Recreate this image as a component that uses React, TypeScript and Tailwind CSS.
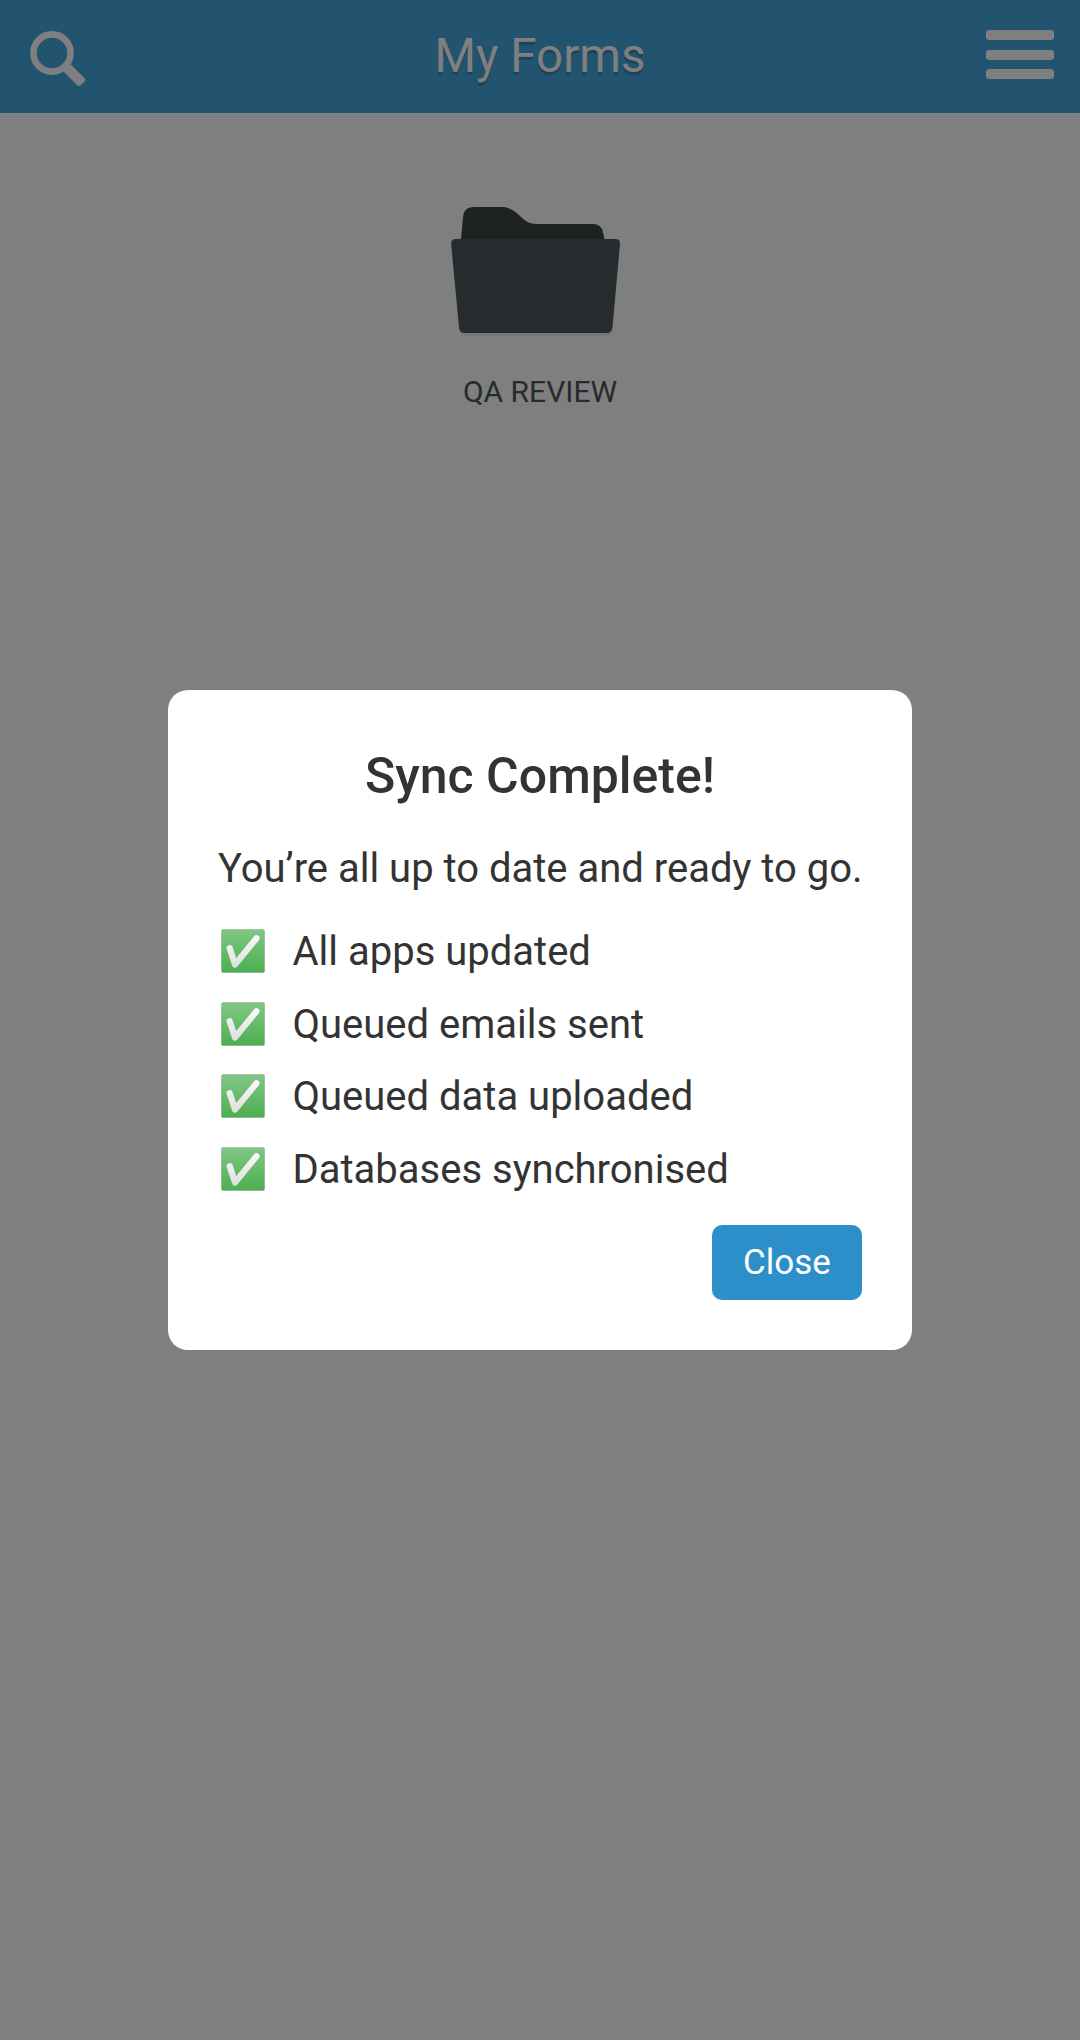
import { useId } from "react";

function SearchIcon() {
  return (
    <svg className="h-[60px] w-[60px]" viewBox="28 28 60 60" fill="none">
      <circle cx="52" cy="53" r="18.6" stroke="#fff" strokeWidth="6.6" />
      <path
        d="M70.8 64.6 84.6 78.2Q86 79.8 84.6 81.4L80.8 85.2Q79 86.6 77.2 85.2L63.2 71.2Z"
        fill="#fff"
      />
    </svg>
  );
}

function FolderIcon() {
  return (
    <svg className="h-[136px] w-[176px]" viewBox="18 14 176 136">
      <path
        d="M30.700 52 33 27Q34 17 43 17H72C81 17 86.500 22.500 90.500 26.500C95 31 99 34 107 34H163Q171 34 173 42L175 52Z"
        fill="#3c4447"
      />
      <path d="M27 52H186L183 139Q182 146 176 146H36Q30 146 29 139Z" fill="#000" opacity="0.06" />
      <path
        d="M26 49H185.500Q190.300 49 190 54L182.500 137Q182 143 176.500 143H34.500Q29.400 143 29 137L21.100 54Q21 49 26 49Z"
        fill="#4c565c"
      />
    </svg>
  );
}

function CheckEmoji() {
  const id = useId();
  return (
    <svg className="mb-[2px] h-[44px] w-[44px] shrink-0" viewBox="0 0 44 44">
      <defs>
        <linearGradient id={`${id}g`} x1="0" y1="0" x2="0" y2="1">
          <stop offset="0" stopColor="#81c784" />
          <stop offset="1" stopColor="#4caf50" />
        </linearGradient>
        <linearGradient id={`${id}w`} gradientUnits="userSpaceOnUse" x1="0" y1="6" x2="0" y2="39">
          <stop offset="0" stopColor="#fafafa" />
          <stop offset="1" stopColor="#dedede" />
        </linearGradient>
      </defs>
      <rect x="0.5" y="0.5" width="43" height="43" rx="1.600" fill={`url(#${id}g)`} stroke="#424242" strokeOpacity="0.2" />
      <path
        d="M8.700 19.200 14 35.500 35.500 9.200"
        fill="none"
        stroke={`url(#${id}w)`}
        strokeWidth="6.200"
        strokeLinecap="round"
        strokeLinejoin="round"
      />
    </svg>
  );
}

const results = [
  "All apps updated",
  "Queued emails sent",
  "Queued data uploaded",
  "Databases synchronised",
];

export default function App() {
  return (
    <div className="relative min-h-screen bg-white font-['Roboto',sans-serif]">
      <header className="flex h-[113px] items-center justify-between bg-[#44a6de] pr-[26px] pl-[28px]">
        <div className="flex w-[66px] pt-[2px]">
          <SearchIcon />
        </div>
        <h1 className="text-[47.500px] leading-none text-white [text-shadow:0_2.500px_0_rgba(0,0,0,0.2)]">
          My Forms
        </h1>
        <div className="flex w-[68px] flex-col gap-[9.500px] pb-[4px]">
          <span className="h-[10px] rounded-[3px] bg-white" />
          <span className="h-[10px] rounded-[3px] bg-white" />
          <span className="h-[10px] rounded-[3px] bg-white" />
        </div>
      </header>

      <main className="flex flex-col items-center pt-[91px]">
        <div className="pr-[8px]">
          <FolderIcon />
        </div>
        <p className="mt-[37px] text-[30px] leading-[30px] text-[#4c565c]">QA REVIEW</p>
      </main>

      <div className="absolute inset-0 flex items-center justify-center bg-black/50">
        <section className="flex h-[660px] w-[744px] flex-col rounded-[20px] bg-white px-[50px] pt-[50px] text-[#333]">
          <h2 className="text-center text-[50px] leading-[72px] font-medium">Sync Complete!</h2>
          <p className="mt-[27px] text-[40px] leading-[60px] whitespace-nowrap">
            You’re all up to date and ready to go.
          </p>
          <ul className="mt-[23px] flex flex-col gap-[12.700px]">
            {results.map((text) => (
              <li key={text} className="flex h-[60px] items-center gap-[27.500px] pl-[3px] text-[40px] leading-[60px]">
                <CheckEmoji />
                <span>{text}</span>
              </li>
            ))}
          </ul>
          <button className="mt-auto mb-[50px] h-[75px] w-[150px] self-end rounded-[10px] bg-[#2c8fc9] pt-[2px] text-[35px] text-white">
            Close
          </button>
        </section>
      </div>
    </div>
  );
}
